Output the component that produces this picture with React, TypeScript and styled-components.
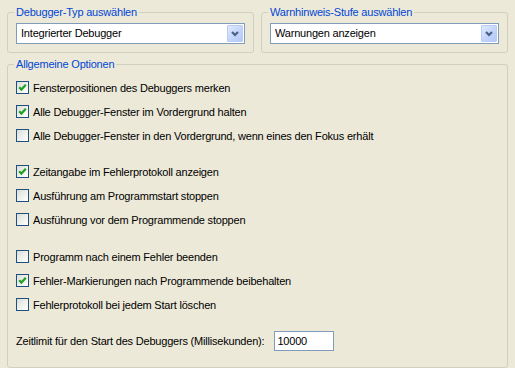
import React from 'react';
import styled, { createGlobalStyle } from 'styled-components';

const Global = createGlobalStyle`
  html, body { margin: 0; padding: 0; background: #ECE9D8; }
  body {
    font-family: Tahoma, "Liberation Sans", Arial, sans-serif;
    font-size: 11px;
    letter-spacing: -0.2px;
    color: #000;
  }
`;

const Page = styled.div`
  width: 515px;
  height: 368px;
  box-sizing: border-box;
  padding: 6px 7px 0 7px;
  display: flex;
  flex-direction: column;
  gap: 5px;
`;

const TopRow = styled.div`
  display: flex;
  gap: 7px;
`;

const Group = styled.fieldset<{ $pad?: string }>`
  flex: 1;
  margin: 0;
  min-width: 0;
  border: 1px solid #D0D0BF;
  border-radius: 3px;
  box-sizing: border-box;
  padding: ${(p) => p.$pad || '4px 8px 8px 8px'};
`;

const Legend = styled.legend`
  margin-left: -2px;
  padding: 0 2px;
  color: #0046D5;
  font-size: 11px;
  line-height: 13px;
`;

const Combo = styled.div`
  height: 21px;
  box-sizing: border-box;
  border: 1px solid #7F9DB9;
  background: #fff;
  display: flex;
  align-items: stretch;
`;

const ComboText = styled.span`
  flex: 1;
  padding-left: 4px;
  line-height: 19px;
  white-space: nowrap;
`;

const ComboButton = styled.span`
  width: 16px;
  margin: 1px;
  box-sizing: border-box;
  border: 1px solid #B9CCF5;
  border-radius: 1px;
  background: linear-gradient(135deg, #E0EAFD 0%, #C6D6FB 50%, #B3C9F7 100%);
  display: flex;
  align-items: center;
  justify-content: center;
`;

const Body = styled.div`
  display: flex;
  flex-direction: column;
`;

const Section = styled.div<{ $before?: number }>`
  display: flex;
  flex-direction: column;
  gap: 11px;
  margin-top: ${(p) => p.$before ?? 0}px;
`;

const Row = styled.label`
  display: flex;
  align-items: center;
  height: 13px;
  gap: 4px;
  white-space: nowrap;
`;

const Box = styled.span`
  width: 13px;
  height: 13px;
  box-sizing: border-box;
  border: 1px solid #1C5180;
  background: linear-gradient(135deg, #DCDCD7 0%, #F2F2EF 60%, #FFFFFF 100%);
  display: flex;
  align-items: center;
  justify-content: center;
  flex: none;
`;

const FieldRow = styled.div`
  display: flex;
  align-items: center;
  gap: 10px;
  margin-top: 20px;
`;

const FieldLabel = styled.span`
  white-space: nowrap;
`;

const Input = styled.div`
  width: 60px;
  height: 20px;
  box-sizing: border-box;
  border: 1px solid #7F9DB9;
  background: #fff;
  padding-left: 2px;
  line-height: 18px;
`;

const Chevron = () => (
  <svg width="8" height="6" viewBox="0 0 8 6">
    <polyline points="1,1 4,4 7,1" fill="none" stroke="#4D6185" strokeWidth="2.2" />
  </svg>
);

const Check = () => (
  <svg width="11" height="11" viewBox="0 0 11 11">
    <polyline points="2.2,5.2 4.4,7.6 8.8,2.8" fill="none" stroke="#21A121" strokeWidth="2.2" />
  </svg>
);

const CheckRow = ({ checked, text }: { checked?: boolean; text: string }) => (
  <Row>
    <Box>{checked && <Check />}</Box>
    <span>{text}</span>
  </Row>
);

const sections: { before: number; items: [boolean, string][] }[] = [
  {
    before: 0,
    items: [
      [true, 'Fensterpositionen des Debuggers merken'],
      [true, 'Alle Debugger-Fenster im Vordergrund halten'],
      [false, 'Alle Debugger-Fenster in den Vordergrund, wenn eines den Fokus erhält'],
    ],
  },
  {
    before: 23,
    items: [
      [true, 'Zeitangabe im Fehlerprotokoll anzeigen'],
      [false, 'Ausführung am Programmstart stoppen'],
      [false, 'Ausführung vor dem Programmende stoppen'],
    ],
  },
  {
    before: 24,
    items: [
      [false, 'Programm nach einem Fehler beenden'],
      [true, 'Fehler-Markierungen nach Programmende beibehalten'],
      [false, 'Fehlerprotokoll bei jedem Start löschen'],
    ],
  },
];

export default function App() {
  return (
    <>
      <Global />
      <Page>
        <TopRow>
          <Group>
            <Legend>Debugger-Typ auswählen</Legend>
            <Combo>
              <ComboText>Integrierter Debugger</ComboText>
              <ComboButton><Chevron /></ComboButton>
            </Combo>
          </Group>
          <Group>
            <Legend>Warnhinweis-Stufe auswählen</Legend>
            <Combo>
              <ComboText>Warnungen anzeigen</ComboText>
              <ComboButton><Chevron /></ComboButton>
            </Combo>
          </Group>
        </TopRow>
        <Group $pad="10px 8px 6px 8px">
          <Legend>Allgemeine Optionen</Legend>
          <Body>
            {sections.map((s, i) => (
              <Section key={i} $before={s.before}>
                {s.items.map(([c, t]) => (
                  <CheckRow key={t} checked={c} text={t} />
                ))}
              </Section>
            ))}
            <FieldRow>
              <FieldLabel>Zeitlimit für den Start des Debuggers (Millisekunden):</FieldLabel>
              <Input>10000</Input>
            </FieldRow>
          </Body>
        </Group>
      </Page>
    </>
  );
}
